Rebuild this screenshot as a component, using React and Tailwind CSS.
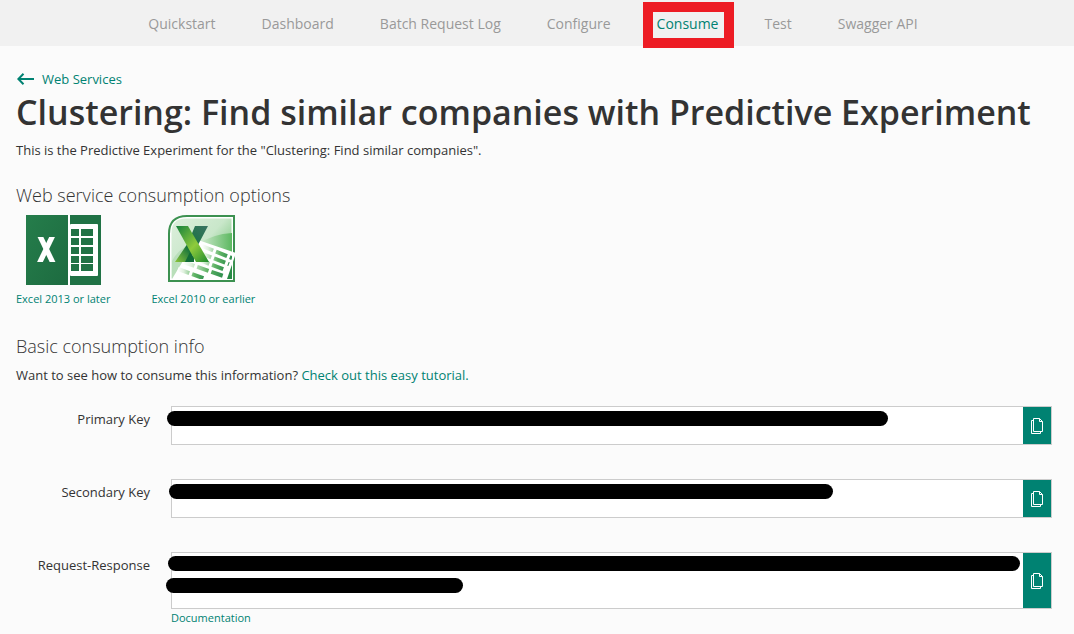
const NAV = ['Quickstart', 'Dashboard', 'Batch Request Log', 'Configure', 'Consume', 'Test', 'Swagger API'];

function TopNav() {
  return (
    <nav className="flex h-[46px] items-center justify-center gap-[46px] bg-[#f1f1f1] pt-0.5 pr-2 text-sm whitespace-nowrap text-[#999]">
      {NAV.map((name) =>
        name === 'Consume' ? (
          <a key={name} href="#consume" aria-current="page" className="relative text-[#008272]">
            {name}
            <span className="pointer-events-none absolute -top-3 -right-4 -bottom-[14px] -left-[14px] border-10 border-[#ed1c24]" />
          </a>
        ) : (
          <a key={name} href={'#' + name.toLowerCase().replaceAll(' ', '-')}>{name}</a>
        )
      )}
    </nav>
  );
}

function BackArrow() {
  return (
    <svg width="18" height="12" viewBox="0 0 18 12" fill="none" stroke="#008272" strokeWidth="2" aria-hidden="true">
      <path d="M2 6H18M7.500 .8 2.400 6 7.500 11.2" />
    </svg>
  );
}

function Excel2013Icon() {
  return (
    <svg width="75" height="70" viewBox="0 0 75 70" aria-hidden="true">
      <defs>
        <linearGradient id="e13" x1="0" y1="0" x2="1" y2="1">
          <stop offset="0" stopColor="#257d4b" />
          <stop offset="1" stopColor="#1d6b40" />
        </linearGradient>
        <clipPath id="mark"><rect x="11" y="22" width="19" height="25" /></clipPath>
      </defs>
      <rect width="75" height="70" fill="#207245" />
      <rect width="42" height="70" fill="url(#e13)" />
      <rect x="42" width="2" height="70" fill="#fff" />
      <rect x="44" y="9" width="28" height="52" rx="1" fill="#fff" />
      {[14, 23, 32, 41, 49].map((y) => (
        <g key={y} fill="#207245">
          <rect x="45" y={y} width="8" height="7" />
          <rect x="55" y={y} width="12" height="7" />
        </g>
      ))}
      <g stroke="#fff" strokeWidth="5.2" clipPath="url(#mark)">
        <line x1="13.500" y1="20" x2="27.500" y2="49" />
        <line x1="27" y1="20" x2="13" y2="49" />
      </g>
    </svg>
  );
}

function Excel2010Icon() {
  return (
    <svg width="70" height="70" viewBox="0 0 70 70" aria-hidden="true">
      <defs>
        <linearGradient id="pane" x1="0" y1="0" x2="1" y2=".9">
          <stop offset="0" stopColor="#dcefdc" />
          <stop offset=".5" stopColor="#c9e7ca" />
          <stop offset="1" stopColor="#58b55c" />
        </linearGradient>
        <linearGradient id="glow" x1="0" y1="0" x2="1" y2="0">
          <stop offset="0" stopColor="#d7edd6" />
          <stop offset="1" stopColor="#5cb860" />
        </linearGradient>
        <linearGradient id="stroke" x1="0" y1="0" x2="1" y2="1">
          <stop offset="0" stopColor="#14803c" />
          <stop offset=".55" stopColor="#8fcb3c" />
          <stop offset="1" stopColor="#1c8a2e" />
        </linearGradient>
        <linearGradient id="back" x1="1" y1="0" x2="0" y2="1">
          <stop offset="0" stopColor="#3a7563" />
          <stop offset=".6" stopColor="#14713c" />
          <stop offset="1" stopColor="#8cc63a" />
        </linearGradient>
        <linearGradient id="sheet" x1="0" y1="0" x2="1" y2="0">
          <stop offset="0" stopColor="#fff" />
          <stop offset=".2" stopColor="#e0f1de" />
          <stop offset=".6" stopColor="#5fb364" />
          <stop offset="1" stopColor="#2c8c4d" />
        </linearGradient>
        <clipPath id="frame"><path d="M4 64V18Q4 3 19 3H64V64Z" /></clipPath>
      </defs>
      <path d="M1 66V19Q1 1 19 1H66V66Z" fill="#fff" stroke="#3c9150" strokeWidth="2" />
      <path d="M3.500 63.500V18Q3.500 3.500 18 3.500H63.500V63.500Z" fill="url(#pane)" />
      <g clipPath="url(#frame)">
        <path d="M30 29Q45 19 64 18V45L30 30Z" fill="url(#glow)" />
        <path d="M4 46Q12 31 27 28L18 48 4 66Z" fill="#b9dfba" />
        <path d="M58 64 65 46V65Z" fill="#278b45" />
      </g>
      <path d="M30 25 68 38 59 64H4L15 46Z" fill="#fff" />
      <g stroke="url(#sheet)" strokeWidth="4" fill="none" clipPath="url(#frame)">
        <path d="M34 31 64 43.100" strokeDasharray="12 3" />
        <path d="M32 38 61 49.200" strokeDasharray="12 3" />
        <path d="M30 44.500 58 55.200" strokeDasharray="12 3" />
        <path d="M15 47 56 61.200" strokeDasharray="12 3" />
        <path d="M10 54 38 64.200" strokeDasharray="12 3" />
      </g>
      <path d="M27 11H40L31 28 24 40V47H7L20 28Z" fill="url(#back)" />
      <path d="M17 47 22 37 26 42V47Z" fill="#126c38" />
      <path d="M8 11H20L41 47H28Z" fill="url(#stroke)" />
    </svg>
  );
}

function CopyIcon() {
  return (
    <svg width="12" height="16" viewBox="0 0 12 16" fill="none" stroke="#fff" aria-hidden="true">
      <path d="M2.500 .5H8.500L11.500 3.500V13.500H2.500ZM8.500 .5V3.500H11.500" />
      <path d="M2.500 2.500H.5V15.500H9.500V13.500" />
    </svg>
  );
}

function KeyField({ id, label, height, bars, children }) {
  return (
    <div className="flex">
      <label htmlFor={id} className="w-[150px] shrink-0 pt-[3px] text-right text-[13px] leading-5">{label}</label>
      <div className="ml-[21px] min-w-0 grow">
        <div className="relative flex border border-[#ccc] bg-white">
          <textarea id={id} readOnly className={'block min-w-0 grow resize-none px-2 outline-none ' + height} />
          <button type="button" aria-label={'Copy ' + label} className="flex w-7 shrink-0 items-center justify-center bg-[#008272]">
            <CopyIcon />
          </button>
          {bars.map((bar) => (
            <span key={bar} className={'pointer-events-none absolute h-[15px] rounded-full bg-black ' + bar} />
          ))}
        </div>
        {children}
      </div>
    </div>
  );
}

export default function App() {
  return (
    <div className="min-h-screen bg-[#fbfbfb] font-['Open_Sans','Noto_Sans',sans-serif] text-[#333]">
      <TopNav />
      <main className="pt-6 pr-[22px] pb-2">
        <div className="pl-4">
          <a href="#web-services" className="flex items-center gap-2 text-[13px] leading-[18px] text-[#008272]">
            <BackArrow />
            Web Services
          </a>
          <h1 className="text-[34px] leading-[48px] font-semibold whitespace-nowrap">
            Clustering: Find similar companies with Predictive Experiment
          </h1>
          <p className="mt-1 text-[13px] leading-5">This is the Predictive Experiment for the "Clustering: Find similar companies".</p>

          <h2 className="mt-5 text-lg leading-[30px] font-light">Web service consumption options</h2>
          <div className="mt-[5px] flex gap-[41px] text-[11px] leading-4 text-[#008272]">
            <a href="#excel-2013" className="flex flex-col items-center gap-[6px]">
              <Excel2013Icon />
              Excel 2013 or later
            </a>
            <a href="#excel-2010" className="flex flex-col items-center gap-[6px]">
              <Excel2010Icon />
              Excel 2010 or earlier
            </a>
          </div>

          <h2 className="mt-6 text-lg leading-[30px] font-light">Basic consumption info</h2>
          <p className="mt-1 text-[13px] leading-5">
            Want to see how to consume this information?{' '}
            <a href="#tutorial" className="text-[#008272]">Check out this easy tutorial.</a>
          </p>
        </div>

        <form className="mt-[21px] flex flex-col gap-[34px]">
          <KeyField id="primary" label="Primary Key" height="h-[37px]" bars={['top-1 -left-[5px] w-[721px]']} />
          <KeyField id="secondary" label="Secondary Key" height="h-[37px]" bars={['top-1 -left-[3px] w-[664px]']} />
          <KeyField
            id="request"
            label="Request-Response"
            height="h-[55px]"
            bars={['top-[3px] -left-1 w-[852px]', 'top-[25px] -left-[6px] w-[297px]']}
          >
            <a href="#documentation" className="block text-[11px] leading-[18px] text-[#008272]">Documentation</a>
          </KeyField>
        </form>
      </main>
    </div>
  );
}
